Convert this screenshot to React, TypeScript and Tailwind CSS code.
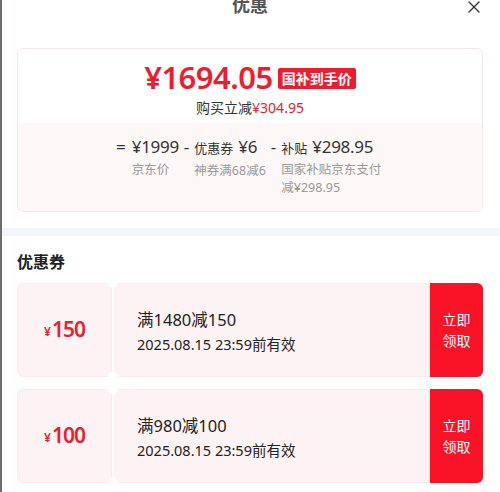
import { X } from 'lucide-react';

const font = { fontFamily: '"Noto Sans", "Noto Sans CJK SC", sans-serif' };

type Coupon = { amount: string; rule: string; expire: string };

const coupons: Coupon[] = [
  { amount: '150', rule: '满1480减150', expire: '2025.08.15 23:59前有效' },
  { amount: '100', rule: '满980减100', expire: '2025.08.15 23:59前有效' },
];

function CouponCard({ c }: { c: Coupon }) {
  return (
    <div className="flex h-[94px] w-full">
      {/* stub */}
      <div className="relative flex w-[95px] items-center justify-center rounded-l-md border border-[#fbe9ec] bg-[#fdf3f5] text-[#e8202f]">
        <span className="mr-[1px] mt-[4px] text-[12px] font-semibold">¥</span>
        <span className="text-[21px] font-semibold tracking-[-1px]">{c.amount}</span>
      </div>
      {/* notch */}
      <div className="relative w-[2px] bg-white">
        <div className="absolute -left-[3px] -top-[3px] h-[8px] w-[8px] rotate-45 bg-white" />
        <div className="absolute -bottom-[3px] -left-[3px] h-[8px] w-[8px] rotate-45 bg-white" />
      </div>
      {/* body */}
      <div className="flex flex-1 flex-col justify-center rounded-l-[4px] border-y border-[#fbe9ec] bg-[#fdf3f5] pl-[23px] pt-[3px] text-[#222]">
        <div className="text-[16.5px] leading-[24px]">{c.rule}</div>
        <div className="text-[14.5px] leading-[24px]">{c.expire}</div>
      </div>
      <button className="flex w-[53px] flex-col items-center justify-center rounded-r-md bg-[#fa1226] text-[14px] leading-[21px] text-white">
        <span>立即</span>
        <span>领取</span>
      </button>
    </div>
  );
}

export default function App() {
  return (
    <div className="relative h-[492px] w-[500px] overflow-hidden bg-white" style={font}>
      {/* page behind sheet */}
      <div className="absolute left-0 top-0 h-full w-[2px] bg-[#6b6f6c]" />

      {/* header */}
      <div className="relative -mt-[9px] flex h-[28px] items-center justify-center">
        <h2 className="text-[18px] font-bold text-[#555]">优惠</h2>
        <X className="absolute right-[16px] top-[6px] h-[20px] w-[20px] text-[#333]" strokeWidth={1.6} />
      </div>

      {/* price summary */}
      <div className="mx-[17px] mt-[29px] overflow-hidden rounded-md border border-[#f7e6e8]">
        <div className="flex flex-col items-center bg-white pb-[5px] pt-[10px]">
          <div className="flex h-[36px] items-center">
            <span className="text-[31px] font-semibold leading-[36px] tracking-[-0.5px] text-[#ee1c2e]">¥1694.05</span>
            <span className="ml-[5px] mt-[2px] rounded-[2px] bg-[#ee1c2e] px-[4px] text-[14px] font-bold leading-[21px] text-white">
              国补到手价
            </span>
          </div>
          <div className="mt-[3px] text-[14px] leading-[20px] text-[#333]">
            购买立减<span className="text-[#e8202f]">¥304.95</span>
          </div>
        </div>
        <div className="flex h-[88px] bg-[#fdf7f7] pl-[98px] pt-[11px] text-[#333]">
          <div className="flex items-start">
            <span className="mr-[6px] text-[17px] leading-[26px]">=</span>
            <div className="flex flex-col">
              <span className="text-[17px] leading-[26px] tracking-[-0.3px]">¥1999</span>
              <span className="text-[12.5px] leading-[20px] text-[#999]">京东价</span>
            </div>
            <span className="mx-[5px] text-[17px] leading-[26px]">-</span>
            <div className="flex flex-col">
              <span className="whitespace-nowrap leading-[26px]">
                <span className="text-[13px]">优惠券</span>
                <span className="ml-[5px] text-[17px] tracking-[-0.3px]">¥6</span>
              </span>
              <span className="text-[12.5px] leading-[20px] text-[#999]">神券满68减6</span>
            </div>
            <span className="mx-[5px] text-[17px] leading-[26px]">-</span>
            <div className="flex w-[102px] flex-col">
              <span className="whitespace-nowrap leading-[26px]">
                <span className="text-[13px]">补贴</span>
                <span className="ml-[5px] text-[17px] tracking-[-0.3px]">¥298.95</span>
              </span>
              <span className="text-[12.5px] leading-[18px] text-[#999]">国家补贴京东支付减¥298.95</span>
            </div>
          </div>
        </div>
      </div>

      <div className="mt-[16px] h-[8px] bg-[#f5f6fa]" />

      {/* coupons */}
      <div className="px-[17px]">
        <h3 className="mt-[16px] text-[16px] font-bold leading-[20px] text-[#222]">优惠券</h3>
        <div className="mt-[11px] flex flex-col gap-[12px]">
          {coupons.map((c) => (
            <CouponCard key={c.amount} c={c} />
          ))}
        </div>
      </div>
    </div>
  );
}
